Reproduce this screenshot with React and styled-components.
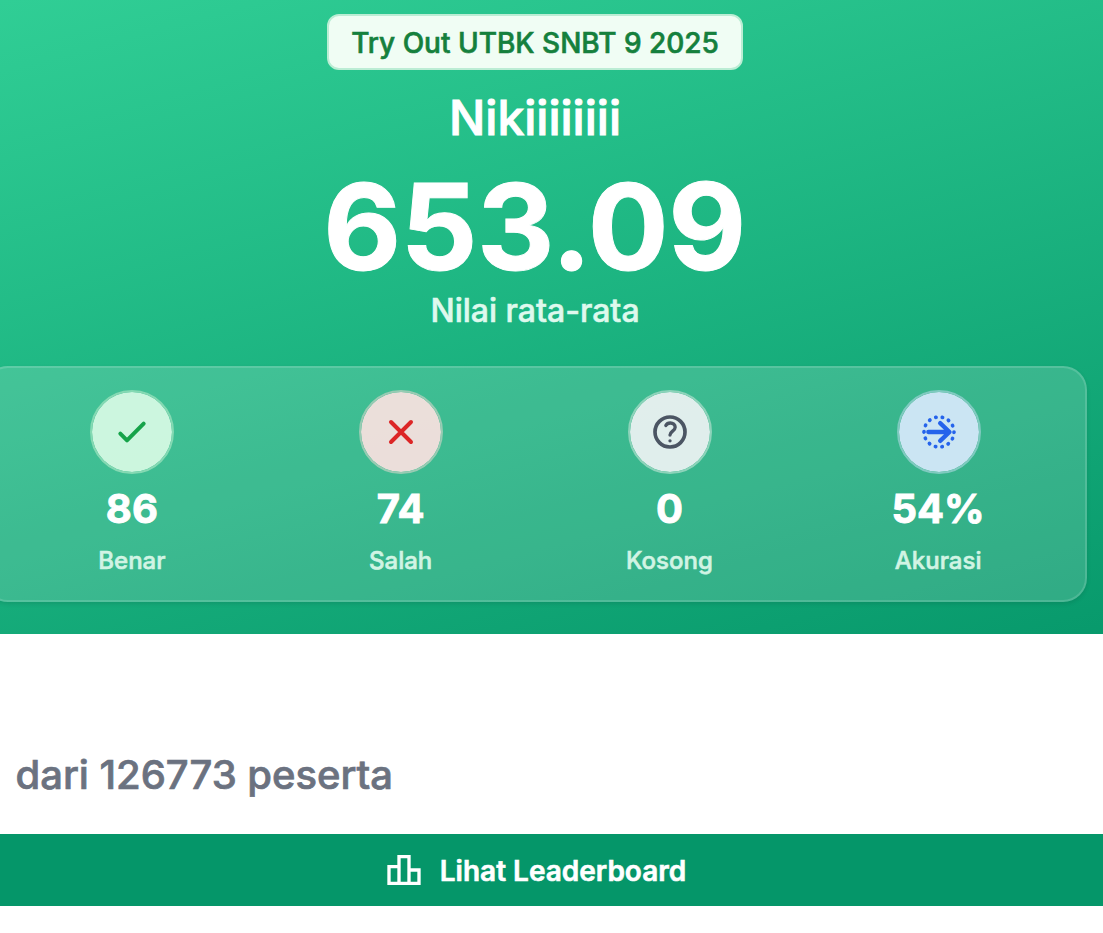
import React from "react";
import styled, { createGlobalStyle } from "styled-components";

const GlobalStyle = createGlobalStyle`
  * { box-sizing: border-box; }
  body {
    margin: 0;
    background: #fff;
    font-family: Inter, "Liberation Sans", sans-serif;
    -webkit-font-smoothing: antialiased;
    -webkit-text-stroke: 0.6px currentColor;
  }
`;

const Viewport = styled.div`
  width: 100%;
  height: 933px;
  overflow: hidden;
`;

const Sheet = styled.main`
  width: 1167px;
  margin: -18px 0 0 -48px;
`;

const Hero = styled.section`
  height: 652px;
  padding: 32px;
  display: flex;
  flex-direction: column;
  align-items: center;
  color: #fff;
  background: linear-gradient(165deg, #34d399 -6%, #059669 106%);

  > * { flex: none; }
`;

const Badge = styled.div`
  height: 56px;
  margin-right: 1px;
  padding: 2px 22px 0;
  display: flex;
  align-items: center;
  border: 2px solid #bbedd4;
  border-radius: 12px;
  background: #f0fdf4;
  color: #15803d;
  font-size: 28px;
  font-weight: 500;
`;

const Name = styled.h1`
  margin: 16px 0 0;
  padding-right: 1px;
  font-size: 48px;
  line-height: 64px;
  font-weight: 500;
  -webkit-text-stroke-width: 1px;
`;

const Score = styled.div`
  margin-top: 17px;
  padding-right: 2px;
  font-size: 120px;
  line-height: 120px;
  font-weight: 700;
  letter-spacing: -0.4px;
  -webkit-text-stroke-width: 1px;
`;

const ScoreLabel = styled.div`
  margin-top: 4px;
  padding-right: 1px;
  font-size: 32px;
  line-height: 40px;
  font-weight: 500;
  color: #def9ed;
`;

const Stats = styled.div`
  width: 100%;
  height: 236px;
  margin-top: 35px;
  padding: 22px 24px;
  display: grid;
  grid-template-columns: repeat(4, 1fr);
  gap: 24px;
  border: 2px solid rgba(255, 255, 255, 0.14);
  border-radius: 24px;
  background: rgba(255, 255, 255, 0.16);
  box-shadow: 0 2px 4px rgba(0, 0, 0, 0.1);
`;

const Stat = styled.div`
  display: flex;
  flex-direction: column;
  align-items: center;
`;

const StatCircle = styled.div`
  width: 84px;
  height: 84px;
  display: flex;
  align-items: center;
  justify-content: center;
  border: 2px solid ${(p) => p.$ring};
  border-radius: 50%;
  background: ${(p) => p.$fill};
  background-clip: padding-box;
  color: ${(p) => p.$ink};
`;

const StatValue = styled.div`
  margin-top: 7px;
  padding-right: 1px;
  font-size: 40px;
  line-height: 56px;
  font-weight: 700;
  -webkit-text-stroke-width: 0.9px;
`;

const StatLabel = styled.div`
  margin-top: 8px;
  padding-right: 1px;
  font-size: 24px;
  line-height: 32px;
  font-weight: 500;
  color: #d1f4e4;
`;

const Participants = styled.p`
  margin: 0;
  height: 200px;
  padding: 113px 0 0 63.5px;
  font-size: 40px;
  line-height: 56px;
  font-weight: 500;
  letter-spacing: -0.03px;
  color: #6b7280;
  -webkit-text-stroke-width: 0.7px;
`;

const LeaderboardButton = styled.button`
  width: 100%;
  height: 72px;
  padding: 0 1px 0 0;
  display: flex;
  align-items: center;
  justify-content: center;
  gap: 16px;
  border: 0;
  background: #059669;
  color: #fff;
  font: 600 28px/40px Inter, "Liberation Sans", sans-serif;
`;

const ButtonText = styled.span`
  padding-top: 2px;
`;

const Icon = styled.svg.attrs({ viewBox: "0 0 24 24", width: 40, height: 40 })`
  flex: none;
  fill: none;
  stroke: currentColor;
  stroke-width: 2.2;
  stroke-linecap: round;
  stroke-linejoin: round;
`;

const SolidIcon = styled(Icon)`
  fill: currentColor;
  stroke: none;
`;

const CheckIcon = () => <Icon><path strokeWidth="2.4" d="M5 13l4 4L19 7" /></Icon>;
const CrossIcon = () => <Icon><path strokeWidth="2.4" d="M6 18L18 6M6 6l12 12" /></Icon>;
const HelpIcon = () => (
  <Icon>
    <circle cx="12" cy="12" r="9" />
    <path strokeWidth="2" d="M9.5 8.1C10 7.1 11 6.6 12.2 6.6c1.6 0 2.9 1 2.9 2.5 0 2.3-3.1 2.4-3.1 4.7M12 17.3h.01" />
  </Icon>
);
const AccuracyIcon = () => (
  <Icon>
    <circle cx="12" cy="12" r="9" pathLength="140" strokeDasharray="0.5 9.5" />
    <path strokeWidth="2.6" d="M5.6 12h12M12.7 6.7l5.6 5.3-5.6 5.3" />
  </Icon>
);
const LeaderboardIcon = () => (
  <SolidIcon>
    <path d="M16 11V3H8v6H2v12h20V11h-6zm-6-6h4v14h-4V5zm-6 6h4v8H4v-8zm16 8h-4v-6h4v6z" />
  </SolidIcon>
);

const STATS = [
  { icon: CheckIcon, value: "86", label: "Benar", fill: "rgba(220,252,231,.9)", ring: "#85d9b3", ink: "#16a34a" },
  { icon: CrossIcon, value: "74", label: "Salah", fill: "rgba(254,226,226,.9)", ring: "#98cbb3", ink: "#dc2626" },
  { icon: HelpIcon, value: "0", label: "Kosong", fill: "rgba(243,244,246,.9)", ring: "#8dd3ba", ink: "#4b5563" },
  { icon: AccuracyIcon, value: "54%", label: "Akurasi", fill: "rgba(219,234,254,.9)", ring: "#80cac0", ink: "#2563eb" },
];

export default function App() {
  return (
    <Viewport>
      <GlobalStyle />
      <Sheet>
        <Hero>
          <Badge>Try Out UTBK SNBT 9 2025</Badge>
          <Name>Nikiiiiiiii</Name>
          <Score>653.09</Score>
          <ScoreLabel>Nilai rata-rata</ScoreLabel>
          <Stats>
            {STATS.map(({ icon: Glyph, value, label, fill, ring, ink }) => (
              <Stat key={label}>
                <StatCircle $fill={fill} $ring={ring} $ink={ink}><Glyph /></StatCircle>
                <StatValue>{value}</StatValue>
                <StatLabel>{label}</StatLabel>
              </Stat>
            ))}
          </Stats>
        </Hero>
        <Participants>dari 126773 peserta</Participants>
        <LeaderboardButton>
          <LeaderboardIcon />
          <ButtonText>Lihat Leaderboard</ButtonText>
        </LeaderboardButton>
      </Sheet>
    </Viewport>
  );
}
